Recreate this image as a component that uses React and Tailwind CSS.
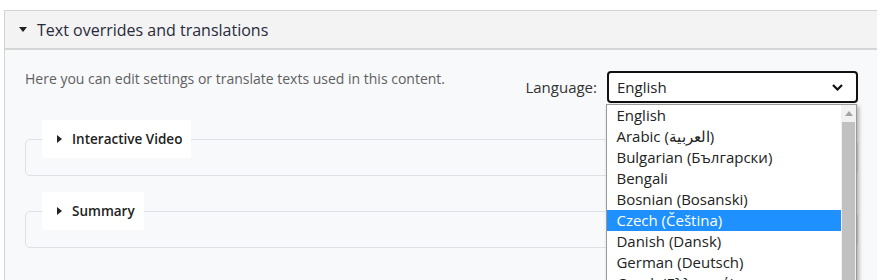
const languages = [
  'English',
  'Arabic (العربية)',
  'Bulgarian (Български)',
  'Bengali',
  'Bosnian (Bosanski)',
  'Czech (Čeština)',
  'Danish (Dansk)',
  'German (Deutsch)',
  'Greek (Ελληνικά)',
  'Spanish (Español)',
]

function Group({ title }) {
  return (
    <div className="pt-[19px]">
      <div className="border border-[#dde0e6] rounded-[5px] h-[37px]">
        <div className="-mt-[20px] ml-4 flex w-fit items-center h-[38px] bg-white pl-[15px] pr-[9px] gap-[10px]">
          <svg width="5" height="8" viewBox="0 0 5 8" className="text-[#222]">
            <path d="M0 0 L5 4 L0 8 Z" fill="currentColor" />
          </svg>
          <span className="text-[13.5px] font-semibold text-[#222]">{title}</span>
        </div>
      </div>
    </div>
  )
}

function App() {
  const selected = 'Czech (Čeština)'
  return (
    <div className="h-[280px] overflow-hidden bg-white pt-[10px] pl-1 pr-[7px]" style={{ fontFamily: '"Open Sans", sans-serif' }}>
      <div className="border-l border-t border-[#d3d3d3]">
        <div className="h-[39px] bg-[#f3f3f3] border-b-2 border-[#d6d6d6] flex items-center pl-[14px] gap-[10px]">
          <svg width="8" height="5" viewBox="0 0 8 5" className="text-[#222]">
            <path d="M0 0 L8 0 L4 5 Z" fill="currentColor" />
          </svg>
          <span className="text-[16px] text-[#2a2a3a]">Text overrides and translations</span>
        </div>
        <div className="bg-[#f8f9fb] pl-5 pr-[19px] pt-[19px] pb-10">
          <div className="flex justify-between items-start">
            <p className="text-[14px] leading-5 text-[#5f5f5f]">Here you can edit settings or translate texts used in this content.</p>
            <div className="flex items-center gap-[10px] mt-[2px] relative">
              <span className="text-[15px] text-[#333]">Language:</span>
              <div className="w-[251px] h-[32px] border-2 border-[#111] rounded-[4px] bg-white flex items-center justify-between pl-[8px] pr-[13px]">
                <span className="text-[15px] text-[#222]">English</span>
                <svg width="11" height="7" viewBox="0 0 11 7">
                  <path d="M1 1 L5.5 5.5 L10 1" fill="none" stroke="#111" strokeWidth="2.2" />
                </svg>
              </div>
              <div className="absolute left-[81px] top-[33px] w-[251px] h-[200px] bg-white border border-[#9a9a9a] shadow-[2px_2px_4px_rgba(0,0,0,0.3)] flex">
                <div className="flex-1">
                  {languages.map(l => (
                    <div
                      key={l}
                      className={l === selected
                        ? 'h-[21px] leading-[21px] pl-[9px] text-[15px] bg-[#1e90ff] text-white'
                        : 'h-[21px] leading-[21px] pl-[9px] text-[15px] text-[#222]'}
                    >
                      {l}
                    </div>
                  ))}
                </div>
                <div className="w-[15px] bg-[#f1f1f1] flex flex-col items-center">
                  <div className="h-[17px] flex items-center justify-center">
                    <svg width="8" height="5" viewBox="0 0 8 5">
                      <path d="M0 5 L4 0 L8 5 Z" fill="#a3a3a3" />
                    </svg>
                  </div>
                  <div className="w-[13px] flex-1 bg-[#c1c1c1]" />
                </div>
              </div>
            </div>
          </div>
          <div className="mt-[17px]">
            <Group title="Interactive Video" />
          </div>
          <div className="mt-[16px]">
            <Group title="Summary" />
          </div>
        </div>
      </div>
    </div>
  )
}

export default App
